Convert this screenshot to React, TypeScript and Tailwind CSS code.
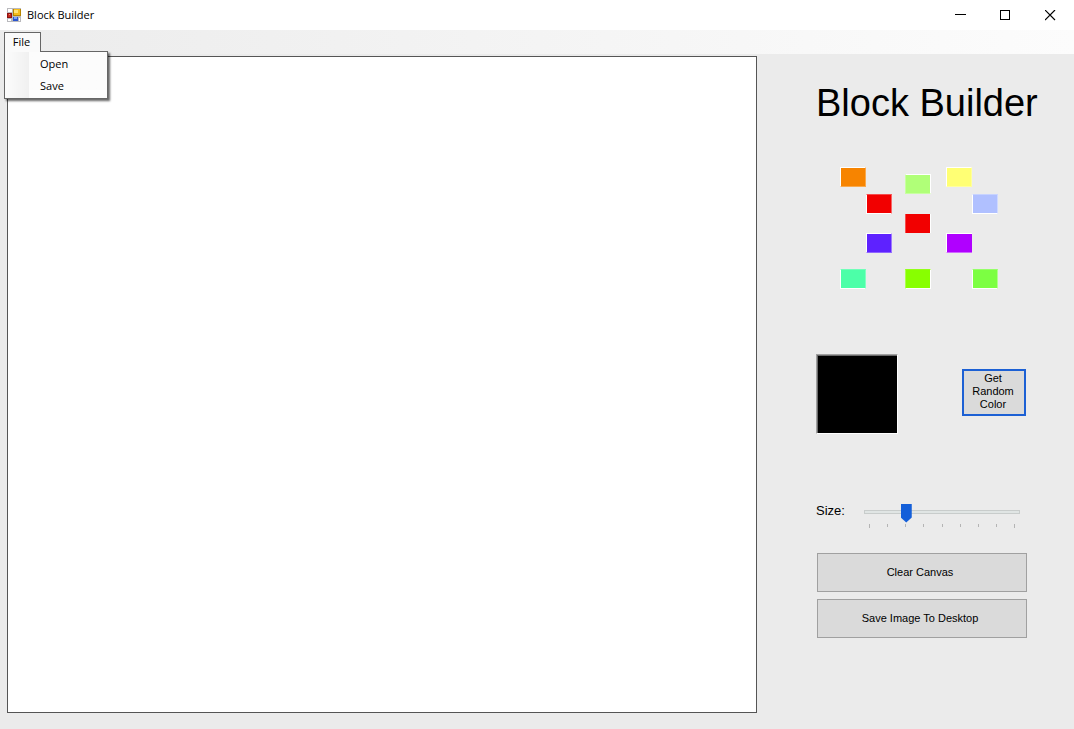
import React, { useState } from "react";

const swatches = [
  { name: "Orange", style: "col-start-1 row-start-1 h-5 bg-[#f78400] border border-t-white border-l-white border-r-white/30 border-b-white/30" },
  { name: "Light green", style: "col-start-3 row-start-2 h-5 bg-[#b0ff78] border border-t-white border-r-white border-l-white/30 border-b-white/30" },
  { name: "Yellow", style: "col-start-4 row-start-1 h-5 bg-[#ffff74] border border-t-white border-l-white border-r-white/30 border-b-white/30" },
  { name: "Red", style: "col-start-2 row-start-3 h-5 bg-[#f20000] border border-l-white border-b-white border-r-white/40 border-t-white/30" },
  { name: "Light blue", style: "col-start-5 row-start-3 h-5 bg-[#b0c0ff] border border-l-white border-b-white border-r-white/40 border-t-white/30" },
  { name: "Crimson", style: "col-start-3 row-start-4 h-[19px] bg-[#f20000] border-x border-r-white border-l-white/30" },
  { name: "Indigo", style: "col-start-2 row-start-5 h-5 bg-[#5e22ff] border border-t-white border-l-white border-r-white/40 border-b-white/30" },
  { name: "Violet", style: "col-start-4 row-start-5 h-5 bg-[#b000ff] border-t border-l border-b border-t-white border-l-white border-b-white/40" },
  { name: "Teal", style: "col-start-1 row-start-6 h-5 bg-[#4cffa8] border border-l-white border-b-white border-r-white/30 border-t-white/20" },
  { name: "Lime", style: "col-start-3 row-start-6 h-5 bg-[#88ff00] border border-r-white border-b-white border-l-white/30 border-t-white/10" },
  { name: "Green", style: "col-start-5 row-start-6 h-5 bg-[#7cff42] border border-l-white border-b-white border-r-white/40 border-t-white/20" },
];

const ticks = [0, 1, 2, 3, 4, 5, 6, 7, 8];

const thumb =
  "[&::-webkit-slider-thumb]:appearance-none [&::-webkit-slider-thumb]:h-[19px] [&::-webkit-slider-thumb]:w-[11px] [&::-webkit-slider-thumb]:bg-[#145fd9] [&::-webkit-slider-thumb]:[clip-path:polygon(0_0,100%_0,100%_74%,50%_100%,0_74%)] [&::-webkit-slider-thumb]:-mt-[7px]";
const track =
  "[&::-webkit-slider-runnable-track]:h-1 [&::-webkit-slider-runnable-track]:border [&::-webkit-slider-runnable-track]:border-[#c8cccb] [&::-webkit-slider-runnable-track]:bg-[#e0e5e4]";

function AppIcon() {
  return (
    <svg width="14" height="14" viewBox="0 0 14 14" shapeRendering="crispEdges" aria-hidden="true">
      <rect width="14" height="14" fill="#b9b9bd" />
      <rect x="1" y="1" width="4" height="3" fill="#fff" />
      <rect x="1" y="11" width="3" height="2" fill="#fff" />
      <rect x="12" y="10" width="1" height="3" fill="#fff" />
      <rect x="0" y="5" width="5" height="5" fill="#8c1010" />
      <rect x="1" y="6" width="3" height="3" fill="#c42a1c" />
      <rect x="2" y="6" width="1" height="1" fill="#ef8a70" />
      <rect x="6" y="1" width="8" height="7" fill="#b88600" />
      <rect x="7" y="1" width="6" height="6" fill="#f5bd1c" />
      <rect x="7" y="2" width="4" height="3" fill="#ffe277" />
      <rect x="6" y="9" width="5" height="4" fill="#2a55cf" />
      <rect x="7" y="9" width="3" height="2" fill="#7da4f5" />
    </svg>
  );
}

export default function App() {
  const [size, setSize] = useState(2);

  return (
    <div className="flex min-h-screen flex-col bg-[#ebebeb] font-['Liberation_Sans',Arial,sans-serif] text-black">
      <header className="flex h-[30px] items-center justify-between bg-white">
        <div className="flex items-center gap-1.5 pl-[7px] font-['Open_Sans','Noto_Sans',sans-serif] text-[11px] leading-4">
          <AppIcon />
          <span>Block Builder</span>
        </div>
        <div className="flex pr-px">
          <button aria-label="Minimize" className="flex h-7 w-[45px] items-center justify-center">
            <svg width="11" height="11" shapeRendering="crispEdges"><path d="M0 4.5h11" stroke="#000" /></svg>
          </button>
          <button aria-label="Maximize" className="flex h-7 w-[45px] items-center justify-center">
            <svg width="11" height="11" shapeRendering="crispEdges"><path d="M.5 .5h9v9h-9z" fill="none" stroke="#000" /></svg>
          </button>
          <button aria-label="Close" className="flex h-7 w-[45px] items-center justify-center">
            <svg width="11" height="11"><path d="M0 0l10 10M10 0L0 10" stroke="#000" strokeWidth="1.2" /></svg>
          </button>
        </div>
      </header>

      <nav className="flex h-6 bg-linear-to-r from-[#ececec] to-[#fcfcfc] pt-0.5 pl-1 font-['Open_Sans','Noto_Sans',sans-serif] text-[11px] leading-4">
        <div className="relative">
          <button className="relative z-20 h-5 w-[37px] border border-b-0 border-[#666] bg-[#fafafa] pr-0.5 pb-0.5">File</button>
          <div
            role="menu"
            className="absolute top-[19px] left-0 z-10 flex w-[104px] flex-col border border-[#666] bg-[#fcfcfc] bg-linear-to-r from-[#fcfcfc] from-0% via-[#f0f0f0] via-[24px] to-[#fcfcfc] to-[24px] py-px shadow-[2px_2px_2px_rgba(0,0,0,0.6)]"
          >
            <button role="menuitem" className="h-[22px] pl-[35px] text-left">Open</button>
            <button role="menuitem" className="h-[22px] pl-[35px] text-left">Save</button>
          </div>
        </div>
      </nav>

      <div className="flex flex-1 pt-0.5 pb-4 pl-[7px]">
        <main aria-label="Canvas" className="flex-1 border border-[#555] bg-white" />

        <aside className="flex w-[317px] flex-col items-start pt-6 pl-[59px]">
          <h1 className="whitespace-nowrap text-[38px] leading-[46px]">Block Builder</h1>

          <div className="mt-[41px] ml-6 grid grid-cols-[26px_39px_41px_26px_26px] grid-rows-[7px_20px_20px_19px_36px_20px]">
            {swatches.map((s) => (
              <button key={s.name} aria-label={s.name} className={`w-[26px] ${s.style}`} />
            ))}
          </div>

          <div className="mt-[65px] flex w-[210px] items-start justify-between">
            <div
              aria-label="Current color"
              className="h-20 w-[82px] border border-t-[#a0a0a0] border-r-white border-b-white border-l-[#a0a0a0] bg-black shadow-[inset_1px_1px_0_#696969]"
            />
            <button className="mt-[15px] h-[47px] w-16 border-2 border-[#1c60d4] bg-[#dadada] pr-1.5 pb-0.5 pl-1 text-[11px] leading-[13px]">
              Get Random Color
            </button>
          </div>

          <div className="mt-[67px] flex items-start">
            <label htmlFor="size" className="w-12 text-[13px] leading-5">Size:</label>
            <div className="w-[156px] pt-px">
              <input
                id="size"
                type="range"
                min={0}
                max={8}
                value={size}
                onChange={(e) => setSize(Number(e.target.value))}
                className={`block h-[19px] w-full appearance-none bg-transparent ${track} ${thumb}`}
              />
              <div className="mt-[3px] flex justify-between px-[5px]">
                {ticks.map((t) => (
                  <span key={t} className="h-[3px] w-px bg-[#b4b4b4] first:h-1 last:h-1" />
                ))}
              </div>
            </div>
          </div>

          <div className="mt-[25px] ml-px flex w-[210px] flex-col gap-[7px] text-[11px]">
            <button className="h-[39px] border border-[#a0a0a0] bg-[#dadada] pr-1">Clear Canvas</button>
            <button className="h-[39px] border border-[#a0a0a0] bg-[#dadada] pr-1">Save Image To Desktop</button>
          </div>
        </aside>
      </div>
    </div>
  );
}
